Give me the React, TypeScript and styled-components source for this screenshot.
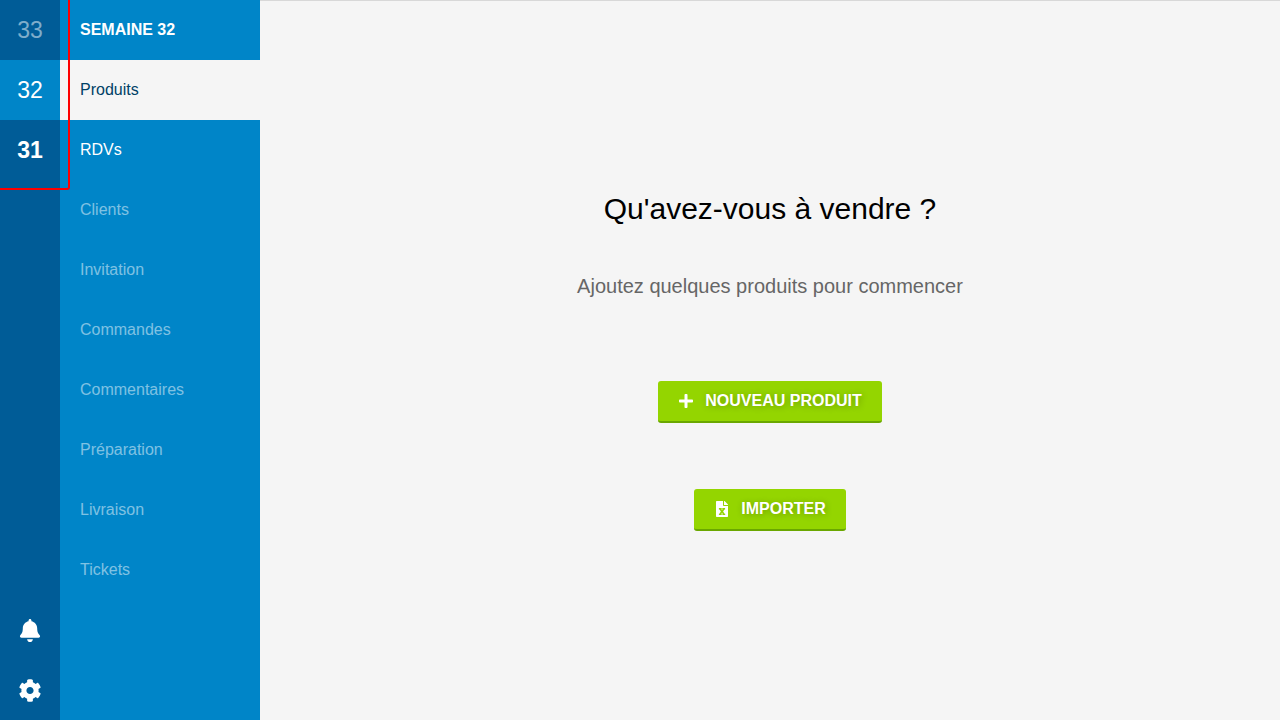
import React from "react";
import styled, { createGlobalStyle } from "styled-components";
import { FaBell, FaCog, FaPlus } from "react-icons/fa";

const GlobalStyle = createGlobalStyle`
  *, *::before, *::after {
    box-sizing: border-box;
  }
  body {
    margin: 0;
    background: #f5f5f5;
    font-family: "Liberation Sans", Arial, Helvetica, sans-serif;
    font-size: 16px;
    line-height: 20px;
    color: #000;
  }
`;

const Page = styled.div`
  display: flex;
  min-height: 100vh;
`;

const WeekRail = styled.nav`
  display: flex;
  flex-direction: column;
  justify-content: space-between;
  flex: 0 0 60px;
  background: #005c97;
`;

const WeekList = styled.div`
  position: relative;

  &::after {
    content: "";
    position: absolute;
    inset: -10px;
    border: 2px solid #f00;
    border-radius: 3px;
    pointer-events: none;
  }
`;

type WeekState = "future" | "selected" | "current";

const weekColors: Record<WeekState, string> = {
  future: "rgba(255, 255, 255, 0.5)",
  selected: "#fff",
  current: "#fff",
};

const WeekLink = styled.a<{ $state: WeekState }>`
  display: flex;
  align-items: center;
  justify-content: center;
  height: 60px;
  font-size: 23px;
  font-weight: ${({ $state }) => ($state === "current" ? 700 : 400)};
  color: ${({ $state }) => weekColors[$state]};
  background: ${({ $state }) => ($state === "selected" ? "#0085c8" : "transparent")};
  text-decoration: none;
`;

const RailButton = styled.button`
  display: flex;
  align-items: center;
  justify-content: center;
  width: 100%;
  height: 60px;
  padding: 1px 0 0;
  border: 0;
  background: none;
  color: #fff;
  cursor: pointer;

  svg {
    width: 24px;
    height: 23px;
  }
`;

const Menu = styled.nav`
  flex: 0 0 200px;
  background: #0085c8;
`;

const MenuTitle = styled.h2`
  display: flex;
  align-items: center;
  height: 60px;
  margin: 0;
  padding: 0 20px;
  font-size: 16px;
  font-weight: 700;
  color: #fff;
  text-transform: uppercase;
`;

type EntryState = "active" | "enabled" | "disabled";

const entryColors: Record<EntryState, string> = {
  active: "#004166",
  enabled: "#fff",
  disabled: "rgba(255, 255, 255, 0.5)",
};

const MenuLink = styled.a<{ $state: EntryState }>`
  display: flex;
  align-items: center;
  height: 60px;
  padding: 0 20px;
  color: ${({ $state }) => entryColors[$state]};
  background: ${({ $state }) => ($state === "active" ? "#f5f5f5" : "transparent")};
  text-decoration: none;
`;

const Content = styled.main`
  display: flex;
  flex: 1;
  flex-direction: column;
  align-items: center;
  justify-content: center;
  border-top: 1px solid #d8d8d8;
`;

const Title = styled.h1`
  margin: 0 0 47px;
  font-size: 30px;
  font-weight: 400;
  line-height: 36px;
`;

const Subtitle = styled.p`
  margin: 0 0 83px;
  font-size: 20px;
  line-height: 24px;
  color: #666;
`;

const Actions = styled.div`
  display: flex;
  flex-direction: column;
  align-items: center;
  gap: 66px;
`;

const ActionButton = styled.button`
  display: flex;
  align-items: center;
  gap: 11px;
  height: 42px;
  padding: 0 20px;
  border: 0;
  border-bottom: 2px solid #6aa700;
  border-radius: 3px;
  background: #94d500;
  color: #fff;
  font: inherit;
  font-weight: 700;
  text-shadow: 1px 1px 6px rgba(0, 0, 0, 0.25);
  text-transform: uppercase;
  cursor: pointer;
`;

const SpreadsheetIcon = () => (
  <svg width="16" height="16" viewBox="0 0 16 16" fill="currentColor" aria-hidden="true">
    <path
      fillRule="evenodd"
      d="M2 .7Q2 0 2.7 0H9v4.2q0 .8.8.8H14v10.3q0 .7-.7.7H2.7Q2 16 2 15.300zM4.900 7v1.400h.6L6.900 10.500 5.400 12.700H4.900V14h2.800v-1.300h-.3L8 11.700l.7 1h-.3V14H11.200v-1.300h-.6L9.100 10.500 10.500 8.400h.6V7H8.300v1.400h.3L8 9.300 7.400 8.400h.3V7z"
    />
    <path d="M10 0h.3q.3 0 .5.200l3 3q.2.2.2.500V4h-4z" />
  </svg>
);

const weeks: { label: string; state: WeekState }[] = [
  { label: "33", state: "future" },
  { label: "32", state: "selected" },
  { label: "31", state: "current" },
];

const entries: { label: string; state: EntryState }[] = [
  { label: "Produits", state: "active" },
  { label: "RDVs", state: "enabled" },
  { label: "Clients", state: "disabled" },
  { label: "Invitation", state: "disabled" },
  { label: "Commandes", state: "disabled" },
  { label: "Commentaires", state: "disabled" },
  { label: "Préparation", state: "disabled" },
  { label: "Livraison", state: "disabled" },
  { label: "Tickets", state: "disabled" },
];

export default function App() {
  return (
    <>
      <GlobalStyle />
      <Page>
        <WeekRail aria-label="Semaines">
          <WeekList>
            {weeks.map(({ label, state }) => (
              <WeekLink key={label} href={`#semaine-${label}`} $state={state}>
                {label}
              </WeekLink>
            ))}
          </WeekList>
          <div>
            <RailButton type="button" aria-label="Notifications">
              <FaBell />
            </RailButton>
            <RailButton type="button" aria-label="Paramètres">
              <FaCog />
            </RailButton>
          </div>
        </WeekRail>
        <Menu aria-label="Semaine 32">
          <MenuTitle>Semaine 32</MenuTitle>
          {entries.map(({ label, state }) => (
            <MenuLink
              key={label}
              href={`#${label.toLowerCase()}`}
              $state={state}
              aria-current={state === "active" ? "page" : undefined}
              aria-disabled={state === "disabled"}
            >
              {label}
            </MenuLink>
          ))}
        </Menu>
        <Content>
          <Title>Qu'avez-vous à vendre ?</Title>
          <Subtitle>Ajoutez quelques produits pour commencer</Subtitle>
          <Actions>
            <ActionButton type="button">
              <FaPlus />
              Nouveau produit
            </ActionButton>
            <ActionButton type="button">
              <SpreadsheetIcon />
              Importer
            </ActionButton>
          </Actions>
        </Content>
      </Page>
    </>
  );
}
